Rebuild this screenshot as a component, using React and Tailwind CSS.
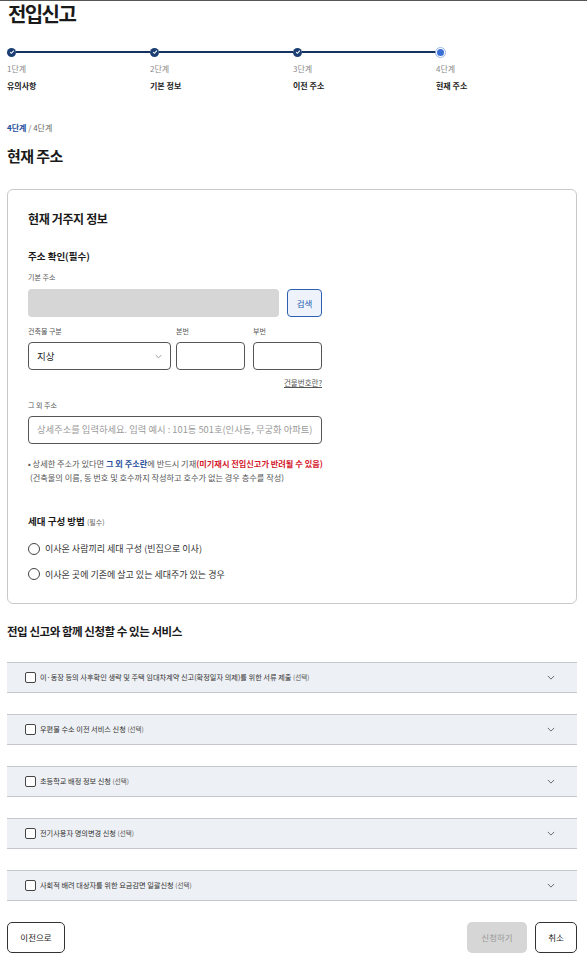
import React from "react";

const steps = [
  { no: "1단계", label: "유의사항", done: true },
  { no: "2단계", label: "기본 정보", done: true },
  { no: "3단계", label: "이전 주소", done: true },
  { no: "4단계", label: "현재 주소", done: false },
];

const services = [
  "이·동장 등의 사후확인 생략 및 주택 임대차계약 신고(확정일자 의제)를 위한 서류 제출",
  "우편물 수소 이전 서비스 신청",
  "초등학교 배정 정보 신청",
  "전기사용자 명의변경 신청",
  "사회적 배려 대상자를 위한 요금감면 일괄신청",
];

const Chevron = ({ className }) => (
  <svg viewBox="0 0 10 6" className={className} fill="none" stroke="currentColor" strokeWidth="1.2">
    <path d="M1 1l4 4 4-4" />
  </svg>
);

const Stepper = () => (
  <div className="flex mt-[20px]">
    {steps.map((s, i) => (
      <div key={s.no} className="w-[143px] shrink-0">
        <div className="flex items-center h-[10px]">
          {s.done ? (
            <span className="w-[9px] h-[9px] rounded-full bg-[#1c3f73] flex items-center justify-center shrink-0">
              <svg viewBox="0 0 8 8" className="w-[6px] h-[6px]" fill="none" stroke="white" strokeWidth="1.4">
                <path d="M1.5 4.2l1.7 1.6 3.3-3.6" />
              </svg>
            </span>
          ) : (
            <span className="w-[11px] h-[11px] rounded-full border border-[#9bb8ec] flex items-center justify-center shrink-0 -ml-[1px]">
              <span className="w-[7px] h-[7px] rounded-full bg-[#3a70d6]" />
            </span>
          )}
          {i < steps.length - 1 && <span className="flex-1 h-[2px] bg-[#15325e]" />}
        </div>
        <div className="mt-[7px] text-[8px] leading-[10px] text-[#888]">{s.no}</div>
        <div className="mt-[7px] text-[8px] leading-[10px] font-bold text-[#222]">{s.label}</div>
      </div>
    ))}
  </div>
);

const Radio = ({ label }) => (
  <label className="flex items-center gap-[5px] text-[9px] text-[#333]">
    <span className="w-[12px] h-[12px] rounded-full border border-[#444] bg-white shrink-0" />
    {label}
  </label>
);

export default function App() {
  return (
    <div
      className="min-h-screen bg-white border-t border-[#555] pl-[7px] pr-[10px] text-[#1a1a1a]"
      style={{ fontFamily: '"Noto Sans CJK KR", "Noto Sans", sans-serif' }}
    >
      <h1 className="pl-[1px] text-[20px] leading-[26px] font-bold tracking-[-0.08em]">전입신고</h1>

      <Stepper />

      <div className="mt-[32px] text-[8px] leading-[10px] text-[#666]">
        <span className="font-bold text-[#1f4e9c]">4단계</span> / 4단계
      </div>
      <h2 className="mt-[14px] text-[15px] leading-[18px] font-bold tracking-[-0.04em]">현재 주소</h2>

      {/* 현재 거주지 정보 카드 */}
      <div className="mt-[24px] border border-[#c9c9c9] rounded-[6px] px-[20px] pt-[21px] pb-[22px]">
        <h3 className="text-[12px] leading-[16px] font-bold tracking-[-0.03em]">현재 거주지 정보</h3>

        <div className="w-[294px]">
          <div className="mt-[23px] text-[9.5px] leading-[12px] font-bold">주소 확인(필수)</div>
          <div className="mt-[11px] text-[7px] leading-[9px] text-[#555]">기본 주소</div>
          <div className="mt-[7px] flex gap-[8px]">
            <div className="flex-1 h-[28px] rounded-[4px] bg-[#d6d6d6]" />
            <button className="w-[35px] h-[28px] rounded-[4px] border border-[#2c5fb0] bg-[#eef3fb] text-[8.5px] text-[#2c5fb0]">
              검색
            </button>
          </div>

          <div className="mt-[10px] flex gap-[5px] text-[7px] leading-[9px] text-[#555]">
            <div className="w-[143px]">
              <div>건축물 구분</div>
              <div className="mt-[6px] h-[28px] rounded-[4px] border border-[#555] flex items-center justify-between pl-[8px] pr-[8px] text-[9.5px] text-[#222]">
                지상
                <Chevron className="w-[7px] h-[5px] text-[#888]" />
              </div>
            </div>
            <div className="w-[69px]">
              <div>본번</div>
              <div className="mt-[6px] h-[28px] rounded-[4px] border border-[#555]" />
            </div>
            <div className="flex-1 pl-[3px]">
              <div>부번</div>
              <div className="mt-[6px] h-[28px] rounded-[4px] border border-[#555]" />
            </div>
          </div>

          <div className="mt-[8px] text-right text-[7.5px] leading-[10px] text-[#555] underline">건물번호란?</div>

          <div className="mt-[13px] text-[7px] leading-[9px] text-[#555]">그 외 주소</div>
          <div className="mt-[6px] h-[28px] rounded-[4px] border border-[#555] flex items-center px-[8px] text-[9.3px] text-[#9a9a9a] whitespace-nowrap">
            상세주소를 입력하세요. 입력 예시 : 101동 501호(인사동, 무궁화 아파트)
          </div>
        </div>

        <div className="mt-[12px] text-[8.2px] leading-[14px] text-[#555] whitespace-nowrap">
          <div>
            • 상세한 주소가 있다면 <span className="font-bold text-[#1f4e9c]">그 외 주소란</span>에 반드시 기재
            <span className="font-bold text-[#d4182c]">(미기재시 전입신고가 반려될 수 있음)</span>
          </div>
          <div className="pl-[2px]">(건축물의 이름, 동 번호 및 호수까지 작성하고 호수가 없는 경우 층수를 작성)</div>
        </div>

        <div className="mt-[31px] text-[9.5px] leading-[12px] font-bold">
          세대 구성 방법 <span className="font-normal text-[7px] text-[#666]">(필수)</span>
        </div>
        <div className="mt-[14px] flex flex-col gap-[12px]">
          <Radio label="이사온 사람끼리 세대 구성 (빈집으로 이사)" />
          <Radio label="이사온 곳에 기존에 살고 있는 세대주가 있는 경우" />
        </div>
      </div>

      <h2 className="mt-[19px] text-[11.5px] leading-[16px] font-bold tracking-[-0.04em]">
        전입 신고와 함께 신청할 수 있는 서비스
      </h2>

      <div className="mt-[23px] flex flex-col gap-[21px]">
        {services.map((s) => (
          <div
            key={s}
            className="h-[31px] bg-[#edf0f4] border-y border-[#c4c7cc] flex items-center pl-[18px] pr-[22px]"
          >
            <span className="w-[11px] h-[11px] border border-[#444] rounded-[2px] bg-white shrink-0" />
            <span className="ml-[4px] text-[7.2px] text-[#333] whitespace-nowrap">
              {s} <span className="text-[6.5px] text-[#555]">(선택)</span>
            </span>
            <Chevron className="ml-auto w-[8px] h-[5px] text-[#666]" />
          </div>
        ))}
      </div>

      <div className="mt-[21px] flex items-center pb-[6px]">
        <button className="w-[58px] h-[31px] rounded-[5px] border border-[#333] text-[8.5px] text-[#222]">이전으로</button>
        <button className="ml-auto w-[60px] h-[31px] rounded-[5px] bg-[#d6d6d6] text-[8.5px] text-[#9a9a9a]">신청하기</button>
        <button className="ml-[8px] w-[42px] h-[31px] rounded-[5px] border border-[#333] text-[8.5px] text-[#222]">취소</button>
      </div>
    </div>
  );
}
